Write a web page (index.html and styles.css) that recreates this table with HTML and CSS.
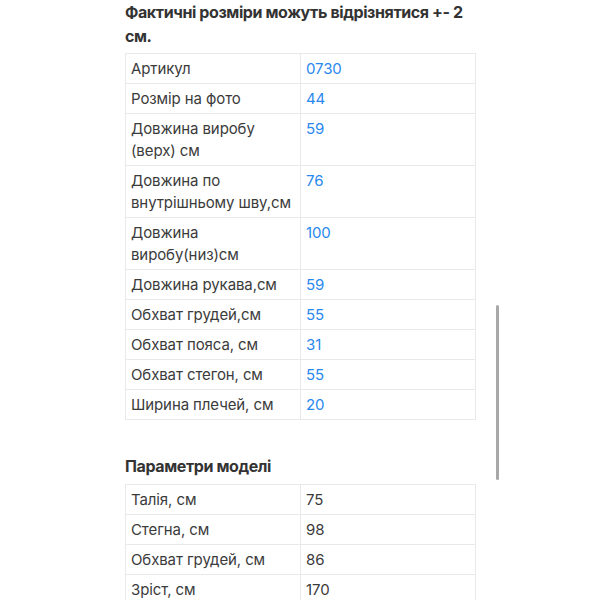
FILE: index.html
```html
<!DOCTYPE html>
<html lang="uk">
<head>
<meta charset="utf-8">
<link rel="stylesheet" href="styles.css">
</head>
<body>
<div class="page">
  <h3 class="heading first">Фактичні розміри можуть відрізнятися +- 2<br>см.</h3>
  <table class="spec">
    <tr><td class="k">Артикул</td><td class="v blue">0730</td></tr>
    <tr><td class="k">Розмір на фото</td><td class="v blue">44</td></tr>
    <tr><td class="k">Довжина виробу (верх) см</td><td class="v blue">59</td></tr>
    <tr><td class="k">Довжина по внутрішньому шву,см</td><td class="v blue">76</td></tr>
    <tr><td class="k">Довжина виробу(низ)см</td><td class="v blue">100</td></tr>
    <tr><td class="k">Довжина рукава,см</td><td class="v blue">59</td></tr>
    <tr><td class="k">Обхват грудей,см</td><td class="v blue">55</td></tr>
    <tr><td class="k">Обхват пояса, см</td><td class="v blue">31</td></tr>
    <tr><td class="k">Обхват стегон, см</td><td class="v blue">55</td></tr>
    <tr><td class="k">Ширина плечей, см</td><td class="v blue">20</td></tr>
  </table>
  <h3 class="heading second">Параметри моделі</h3>
  <table class="spec">
    <tr><td class="k">Талія, см</td><td class="v">75</td></tr>
    <tr><td class="k">Стегна, см</td><td class="v">98</td></tr>
    <tr><td class="k">Обхват грудей, см</td><td class="v">86</td></tr>
    <tr><td class="k">Зріст, см</td><td class="v">170</td></tr>
  </table>
</div>
<div class="scrollbar"></div>
</body>
</html>
```
FILE: styles.css
```css
html, body {
  margin: 0;
  padding: 0;
  background: #ffffff;
}
body {
  font-family: Inter, "Noto Sans", "Liberation Sans", sans-serif;
  color: #3b3b3b;
}
.page {
  padding-left: 125px;
  width: 351px;
}
.heading {
  font-size: 16px;
  font-weight: 700;
  line-height: 24px;
  color: #333333;
  margin: 0;
  white-space: nowrap;
  letter-spacing: -0.4px;
}
.heading.second {
  margin-top: 34px;
}
.spec {
  border-collapse: collapse;
  width: 351px;
  table-layout: fixed;
  margin-top: 5px;
}
.heading.second + .spec {
  margin-top: 6px;
}
.spec td {
  border: 1px solid #e9e9e9;
  padding: 4px 5px 3px 5px;
  font-size: 15px;
  line-height: 22px;
  vertical-align: top;
  letter-spacing: -0.1px;
}
.spec td.k {
  width: 175px;
  box-sizing: border-box;
}
.spec td.blue {
  color: #2a88ee;
}
.scrollbar {
  position: absolute;
  left: 496px;
  top: 305px;
  width: 3px;
  height: 175px;
  border-radius: 2px;
  background: #a8a8a8;
}
```
